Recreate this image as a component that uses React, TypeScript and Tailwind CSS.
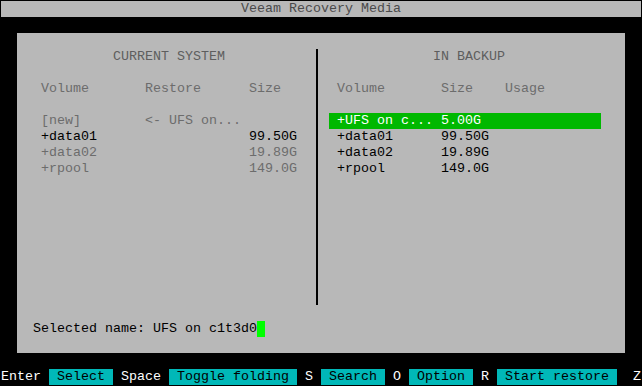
const font = { fontFamily: '"Liberation Mono", "DejaVu Sans Mono", monospace' };

const leftRows = [
  { vol: "[new]", restore: "<- UFS on...", size: "", tone: "text-[#6c6c6c]" },
  { vol: "+data01", restore: "", size: "99.50G", tone: "text-black" },
  { vol: "+data02", restore: "", size: "19.89G", tone: "text-[#6c6c6c]" },
  { vol: "+rpool", restore: "", size: "149.0G", tone: "text-[#6c6c6c]" },
];

const rightRows = [
  { vol: "+data01", size: "99.50G" },
  { vol: "+data02", size: "19.89G" },
  { vol: "+rpool", size: "149.0G" },
];

const keys = [
  { key: "Enter", label: "Select" },
  { key: "Space", label: "Toggle folding" },
  { key: "S", label: "Search" },
  { key: "O", label: "Option" },
  { key: "R", label: "Start restore" },
];

const Blank = () => <div className="h-4" />;

export default function App() {
  return (
    <div
      className="w-[642px] h-[386px] bg-black p-px text-[13.333px] leading-4 whitespace-pre overflow-hidden"
      style={font}
    >
      {/* title */}
      <div className="h-4 bg-[#b8b8b8] text-center text-[#4a4a4a]">Veeam Recovery Media</div>
      <Blank />

      {/* main panel */}
      <div className="mx-4 h-[320px] bg-[#b8b8b8] flex flex-col">
        <Blank />
        <div className="flex h-[256px]">
          {/* current system */}
          <div className="w-[296px] flex flex-col">
            <div className="pl-[96px] text-[#5e5e5e]">CURRENT SYSTEM</div>
            <Blank />
            <div className="flex pl-6 text-[#6c6c6c]">
              <span className="w-[104px]">Volume</span>
              <span className="w-[104px]">Restore</span>
              <span>Size</span>
            </div>
            <Blank />
            {leftRows.map((r) => (
              <div key={r.vol} className={`flex h-4 pl-6 ${r.tone}`}>
                <span className="w-[104px]">{r.vol}</span>
                <span className="w-[104px]">{r.restore}</span>
                <span>{r.size}</span>
              </div>
            ))}
          </div>

          <div className="w-2 flex">
            <div className="ml-[3px] w-[2px] bg-black" />
          </div>

          {/* in backup */}
          <div className="flex-1 flex flex-col">
            <div className="pl-[112px] text-[#5e5e5e]">IN BACKUP</div>
            <Blank />
            <div className="flex pl-4 text-[#6c6c6c]">
              <span className="w-[104px]">Volume</span>
              <span className="w-16">Size</span>
              <span>Usage</span>
            </div>
            <Blank />
            <div className="ml-2 w-[272px] flex h-4 pl-2 bg-[#00b800] text-white">
              <span className="w-[104px]">+UFS on c...</span>
              <span>5.00G</span>
            </div>
            {rightRows.map((r) => (
              <div key={r.vol} className="flex h-4 pl-4 text-black">
                <span className="w-[104px]">{r.vol}</span>
                <span>{r.size}</span>
              </div>
            ))}
          </div>
        </div>
        <Blank />
        <div className="flex h-4 pl-4 text-black">
          <span>Selected name: UFS on c1t3d0</span>
          <span className="w-2 h-4 bg-[#00ff00]" />
        </div>
        <Blank />
      </div>

      <Blank />

      {/* key bar */}
      <div className="flex h-4 text-white">
        {keys.map((k) => (
          <div key={k.key} className="flex">
            <span>{k.key} </span>
            <span className="bg-[#00b8b8] text-black"> {k.label} </span>
            <span> </span>
          </div>
        ))}
        <span> Z</span>
      </div>
    </div>
  );
}
